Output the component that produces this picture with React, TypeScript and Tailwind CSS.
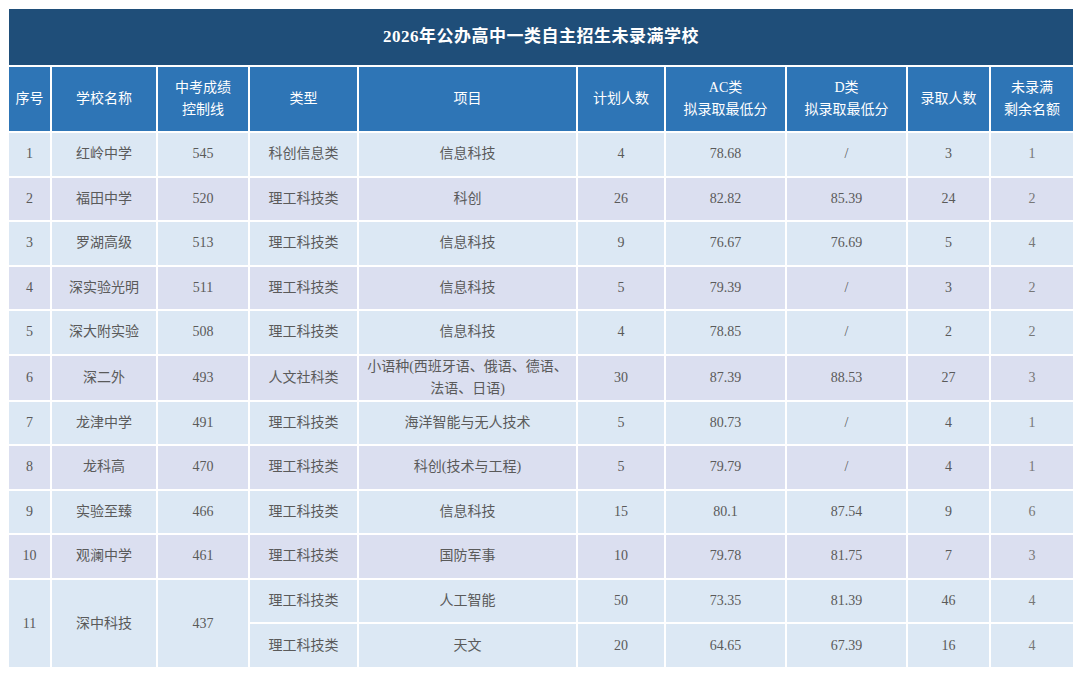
const rows = [
  { no: '1', school: '红岭中学', line: '545', type: '科创信息类', item: '信息科技', plan: '4', ac: '78.68', d: '/', got: '3', left: '1' },
  { no: '2', school: '福田中学', line: '520', type: '理工科技类', item: '科创', plan: '26', ac: '82.82', d: '85.39', got: '24', left: '2' },
  { no: '3', school: '罗湖高级', line: '513', type: '理工科技类', item: '信息科技', plan: '9', ac: '76.67', d: '76.69', got: '5', left: '4' },
  { no: '4', school: '深实验光明', line: '511', type: '理工科技类', item: '信息科技', plan: '5', ac: '79.39', d: '/', got: '3', left: '2' },
  { no: '5', school: '深大附实验', line: '508', type: '理工科技类', item: '信息科技', plan: '4', ac: '78.85', d: '/', got: '2', left: '2' },
  { no: '6', school: '深二外', line: '493', type: '人文社科类', item: '小语种(西班牙语、俄语、德语、法语、日语)', plan: '30', ac: '87.39', d: '88.53', got: '27', left: '3' },
  { no: '7', school: '龙津中学', line: '491', type: '理工科技类', item: '海洋智能与无人技术', plan: '5', ac: '80.73', d: '/', got: '4', left: '1' },
  { no: '8', school: '龙科高', line: '470', type: '理工科技类', item: '科创(技术与工程)', plan: '5', ac: '79.79', d: '/', got: '4', left: '1' },
  { no: '9', school: '实验至臻', line: '466', type: '理工科技类', item: '信息科技', plan: '15', ac: '80.1', d: '87.54', got: '9', left: '6' },
  { no: '10', school: '观澜中学', line: '461', type: '理工科技类', item: '国防军事', plan: '10', ac: '79.78', d: '81.75', got: '7', left: '3' },
]

const td = 'border-2 border-white text-center align-middle px-1'

export default function App() {
  return (
    <div className="w-[1080px] h-[677px] bg-white pt-[7px] pl-[7px] font-['Liberation_Serif','Noto_Sans_CJK_SC',serif] text-[14px] text-[#5a5a5a]">
      <table className="w-[1066px] border-collapse table-fixed">
        <colgroup>
          <col className="w-[43px]" />
          <col className="w-[106px]" />
          <col className="w-[92px]" />
          <col className="w-[109px]" />
          <col className="w-[219px]" />
          <col className="w-[88px]" />
          <col className="w-[121px]" />
          <col className="w-[121px]" />
          <col className="w-[83px]" />
          <col className="w-[84px]" />
        </colgroup>
        <thead>
          <tr className="h-[58px] bg-[#1f4e79]">
            <th colSpan={10} className={`${td} text-white text-[17px] font-bold tracking-[0.5px]`}>
              2026年公办高中一类自主招生未录满学校
            </th>
          </tr>
          <tr className="h-[66px] bg-[#2e75b6] text-white leading-[22px]">
            <th className={`${td} font-normal`}>序号</th>
            <th className={`${td} font-normal`}>学校名称</th>
            <th className={`${td} font-normal`}>中考成绩<br />控制线</th>
            <th className={`${td} font-normal`}>类型</th>
            <th className={`${td} font-normal`}>项目</th>
            <th className={`${td} font-normal`}>计划人数</th>
            <th className={`${td} font-normal`}>AC类<br />拟录取最低分</th>
            <th className={`${td} font-normal`}>D类<br />拟录取最低分</th>
            <th className={`${td} font-normal`}>录取人数</th>
            <th className={`${td} font-normal`}>未录满<br />剩余名额</th>
          </tr>
        </thead>
        <tbody>
          {rows.map((r, i) => (
            <tr key={r.no} className={`h-[44.5px] leading-[22px] ${i % 2 === 0 ? 'bg-[#dce8f4]' : 'bg-[#dbdff0]'}`}>
              <td className={td}>{r.no}</td>
              <td className={td}>{r.school}</td>
              <td className={td}>{r.line}</td>
              <td className={td}>{r.type}</td>
              <td className={`${td} px-2`}>{r.item}</td>
              <td className={td}>{r.plan}</td>
              <td className={td}>{r.ac}</td>
              <td className={td}>{r.d}</td>
              <td className={td}>{r.got}</td>
              <td className={`${td} text-[#777]`}>{r.left}</td>
            </tr>
          ))}
          <tr className="h-[44.5px] bg-[#dce8f4]">
            <td rowSpan={2} className={td}>11</td>
            <td rowSpan={2} className={td}>深中科技</td>
            <td rowSpan={2} className={td}>437</td>
            <td className={td}>理工科技类</td>
            <td className={td}>人工智能</td>
            <td className={td}>50</td>
            <td className={td}>73.35</td>
            <td className={td}>81.39</td>
            <td className={td}>46</td>
            <td className={`${td} text-[#777]`}>4</td>
          </tr>
          <tr className="h-[44.5px] bg-[#dce8f4]">
            <td className={td}>理工科技类</td>
            <td className={td}>天文</td>
            <td className={td}>20</td>
            <td className={td}>64.65</td>
            <td className={td}>67.39</td>
            <td className={td}>16</td>
            <td className={`${td} text-[#777]`}>4</td>
          </tr>
        </tbody>
      </table>
    </div>
  )
}
